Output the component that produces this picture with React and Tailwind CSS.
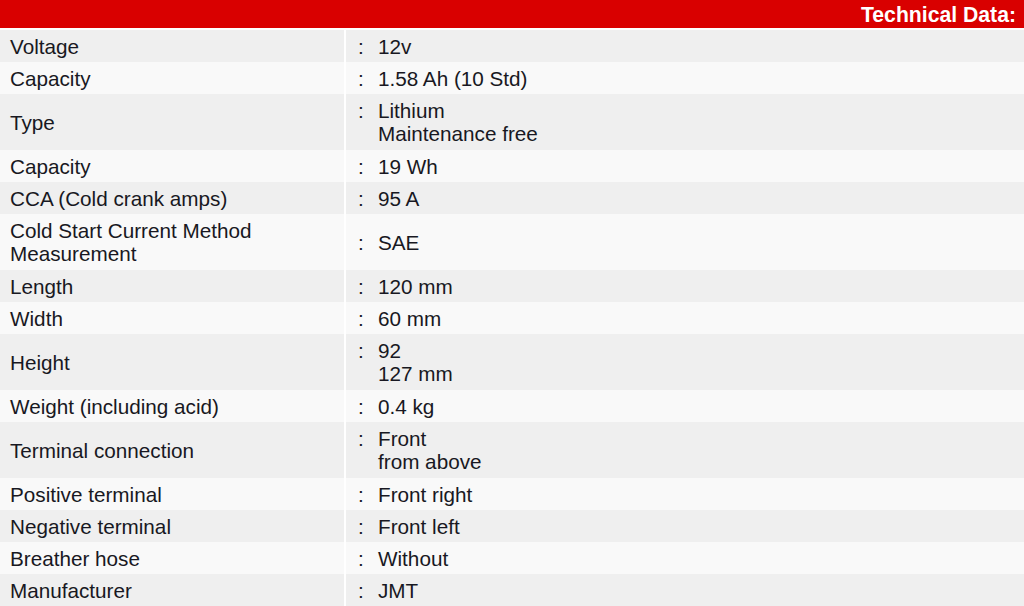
import React from "react";

const rows = [
  { label: ["Voltage"], value: ["12v"] },
  { label: ["Capacity"], value: ["1.58 Ah (10 Std)"] },
  { label: ["Type"], value: ["Lithium", "Maintenance free"] },
  { label: ["Capacity"], value: ["19 Wh"] },
  { label: ["CCA (Cold crank amps)"], value: ["95 A"] },
  { label: ["Cold Start Current Method", "Measurement"], value: ["SAE"] },
  { label: ["Length"], value: ["120 mm"] },
  { label: ["Width"], value: ["60 mm"] },
  { label: ["Height"], value: ["92", "127 mm"] },
  { label: ["Weight (including acid)"], value: ["0.4 kg"] },
  { label: ["Terminal connection"], value: ["Front", "from above"] },
  { label: ["Positive terminal"], value: ["Front right"] },
  { label: ["Negative terminal"], value: ["Front left"] },
  { label: ["Breather hose"], value: ["Without"] },
  { label: ["Manufacturer"], value: ["JMT"] },
];

const App = () => {
  return (
    <div className="w-[1024px] h-[606px] overflow-hidden bg-white text-[#181822] text-[20.7px] leading-[23px] font-['Liberation_Sans',Arial,sans-serif]">
      {/* Header bar */}
      <div className="h-[28px] bg-[#d90000] flex items-center justify-end pr-[8px]">
        <span className="text-white font-bold text-[21.2px]">Technical Data:</span>
      </div>

      <div className="mt-[2px] flex flex-col">
        {rows.map((row, i) => {
          const tall = row.label.length > 1 || row.value.length > 1;
          const bg = i % 2 === 0 ? "bg-[#efefef]" : "bg-[#f9f9f9]";
          return (
            <div key={i} className={`flex ${tall ? "h-[56px]" : "h-[32px]"}`}>
              <div className={`w-[344px] ${bg} flex flex-col justify-center pl-[10px]`}>
                {row.label.map((t, j) => (
                  <span key={j}>{t}</span>
                ))}
              </div>
              <div className={`flex-1 ml-[2px] ${bg} flex items-center pl-[12px]`}>
                <div className="flex">
                  <span className="w-[20px]">:</span>
                  <div className="flex flex-col">
                    {row.value.map((t, j) => (
                      <span key={j}>{t}</span>
                    ))}
                  </div>
                </div>
              </div>
            </div>
          );
        })}
      </div>
    </div>
  );
};

export default App;
